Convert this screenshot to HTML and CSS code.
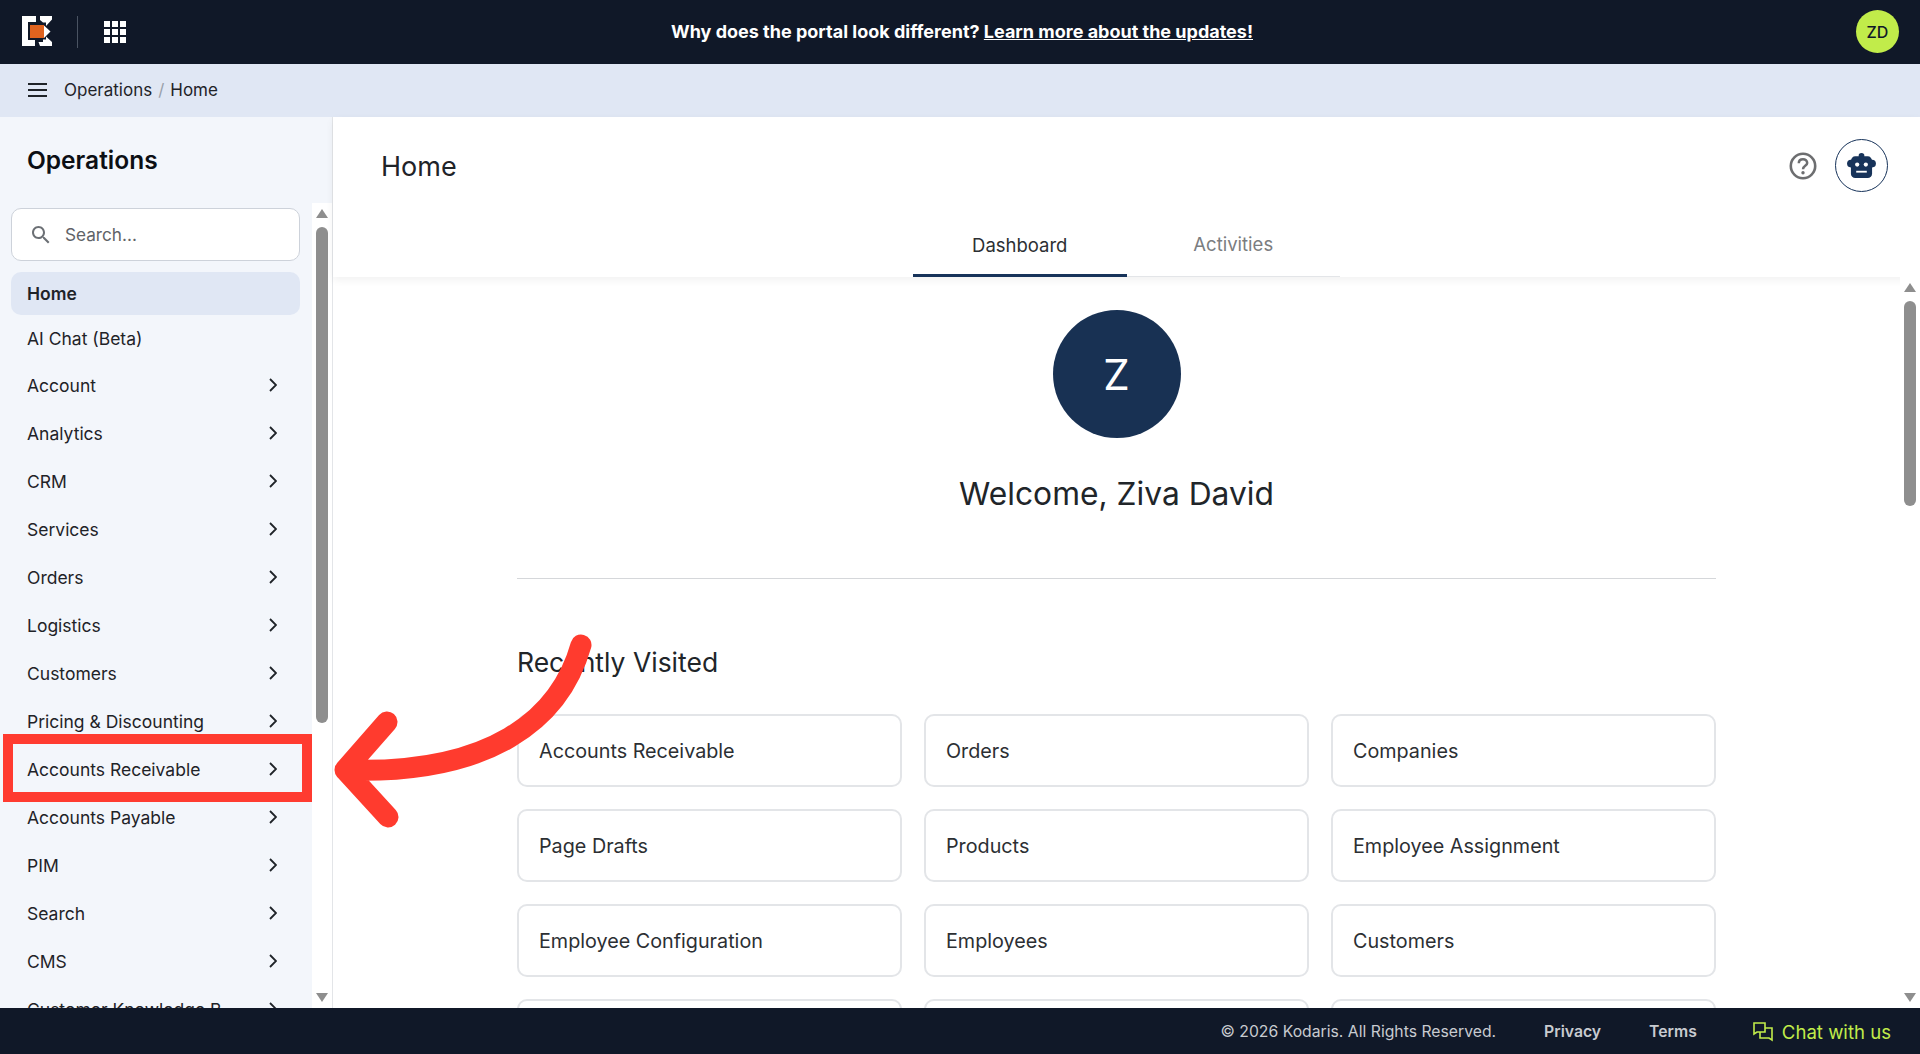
FILE: index.html

```html
<!DOCTYPE html>
<html lang="en">
<head>
  <meta charset="UTF-8">
  <title>Home - Operations</title>
  <link rel="stylesheet" href="styles.css">
</head>
<body>
  <header class="topbar">
    <div class="topbar-left">
      <svg class="logo" viewBox="0 0 30 30">
        <path fill="#fff" d="M0 0H14V6H6V24H13V30H0Z"/>
        <path fill="#fff" d="M18 0H30V3.500L24 10V6.500H21L18 4Z"/>
        <path fill="#fff" d="M24 20.500L30 26V30H18L16.500 26H21V23.500H24Z"/>
        <path fill="#fff" d="M22 9.500L28.500 15.500L22 22Z"/>
        <rect fill="#e0631f" x="8" y="9" width="14" height="13"/>
      </svg>
      <span class="topbar-divider"></span>
      <svg class="apps" viewBox="0 0 22 22" fill="#fff">
        <rect x="0" y="0" width="6" height="6"/><rect x="8" y="0" width="6" height="6"/><rect x="16" y="0" width="6" height="6"/>
        <rect x="0" y="8" width="6" height="6"/><rect x="8" y="8" width="6" height="6"/><rect x="16" y="8" width="6" height="6"/>
        <rect x="0" y="16" width="6" height="6"/><rect x="8" y="16" width="6" height="6"/><rect x="16" y="16" width="6" height="6"/>
      </svg>
    </div>
    <p class="banner">Why does the portal look different? <a href="#">Learn more about the updates!</a></p>
    <div class="user-badge">ZD</div>
  </header>

  <div class="crumbbar">
    <svg class="menu-icon" viewBox="0 0 19 14"><path d="M0 1H19M0 7H19M0 13H19"/></svg>
    <span>Operations</span><span class="crumb-sep">/</span><span>Home</span>
  </div>

  <div class="shell">
    <aside class="sidebar">
      <h2 class="sidebar-title">Operations</h2>
      <div class="sidebar-body">
        <div class="sidebar-col">
          <div class="search">
            <svg class="search-icon" viewBox="0 0 24 24"><path d="M15.500 14h-.79l-.28-.27C15.410 12.590 16 11.110 16 9.500 16 5.910 13.090 3 9.500 3S3 5.910 3 9.500 5.910 16 9.500 16c1.610 0 3.090-.59 4.230-1.570l.27.28v.79l5 4.990L20.490 19l-4.990-5zm-6 0C7.010 14 5 11.990 5 9.500S7.010 5 9.500 5 14 7.010 14 9.500 11.990 14 9.500 14z"/></svg>
            <span>Search...</span>
          </div>
          <nav class="nav">
            <a class="nav-item nav-home">Home</a>
            <a class="nav-item nav-plain">AI Chat (Beta)</a>
            <a class="nav-item">Account<svg class="chev" viewBox="0 0 8 14"><path d="M1 1L7 7L1 13"/></svg></a>
            <a class="nav-item">Analytics<svg class="chev" viewBox="0 0 8 14"><path d="M1 1L7 7L1 13"/></svg></a>
            <a class="nav-item">CRM<svg class="chev" viewBox="0 0 8 14"><path d="M1 1L7 7L1 13"/></svg></a>
            <a class="nav-item">Services<svg class="chev" viewBox="0 0 8 14"><path d="M1 1L7 7L1 13"/></svg></a>
            <a class="nav-item">Orders<svg class="chev" viewBox="0 0 8 14"><path d="M1 1L7 7L1 13"/></svg></a>
            <a class="nav-item">Logistics<svg class="chev" viewBox="0 0 8 14"><path d="M1 1L7 7L1 13"/></svg></a>
            <a class="nav-item">Customers<svg class="chev" viewBox="0 0 8 14"><path d="M1 1L7 7L1 13"/></svg></a>
            <a class="nav-item">Pricing &amp; Discounting<svg class="chev" viewBox="0 0 8 14"><path d="M1 1L7 7L1 13"/></svg></a>
            <a class="nav-item">Accounts Receivable<svg class="chev" viewBox="0 0 8 14"><path d="M1 1L7 7L1 13"/></svg></a>
            <a class="nav-item">Accounts Payable<svg class="chev" viewBox="0 0 8 14"><path d="M1 1L7 7L1 13"/></svg></a>
            <a class="nav-item">PIM<svg class="chev" viewBox="0 0 8 14"><path d="M1 1L7 7L1 13"/></svg></a>
            <a class="nav-item">Search<svg class="chev" viewBox="0 0 8 14"><path d="M1 1L7 7L1 13"/></svg></a>
            <a class="nav-item">CMS<svg class="chev" viewBox="0 0 8 14"><path d="M1 1L7 7L1 13"/></svg></a>
            <a class="nav-item">Customer Knowledge B...<svg class="chev" viewBox="0 0 8 14"><path d="M1 1L7 7L1 13"/></svg></a>
          </nav>
        </div>
        <div class="scrollbar">
          <span class="arrow-up"></span>
          <span class="thumb thumb-side"></span>
          <span class="arrow-down"></span>
        </div>
      </div>
    </aside>

    <main class="main">
      <div class="main-head">
        <div class="title-row">
          <h1>Home</h1>
          <div class="head-tools">
            <svg class="help" viewBox="0 0 28 28">
              <circle cx="14" cy="14" r="12.200"/>
              <path d="M9.800 11.200C9.800 8.600 11.700 7.200 14 7.200C16.300 7.200 18.200 8.700 18.200 11C18.200 13.800 14 13.900 14 17.200"/>
              <circle class="help-dot" cx="14" cy="20.800" r="1.700"/>
            </svg>
            <div class="bot">
              <svg viewBox="0 0 30 26" fill="#17335a">
                <circle cx="15" cy="3" r="3"/>
                <circle cx="4" cy="11" r="4"/>
                <circle cx="26" cy="11" r="4"/>
                <rect x="4" y="3.500" width="22" height="22.500" rx="4.500"/>
                <circle fill="#fff" cx="10.500" cy="12" r="2.200"/>
                <circle fill="#fff" cx="19.500" cy="12" r="2.200"/>
                <rect fill="#fff" x="9.500" y="18.500" width="11" height="1.900"/>
              </svg>
            </div>
          </div>
        </div>
        <div class="tabs">
          <a class="tab tab-active">Dashboard</a>
          <a class="tab">Activities</a>
        </div>
      </div>
      <div class="main-body">
        <div class="content">
          <div class="welcome">
            <div class="avatar">Z</div>
            <h2>Welcome, Ziva David</h2>
          </div>
          <h3>Recently Visited</h3>
          <div class="cards">
            <a class="card">Accounts Receivable</a>
            <a class="card">Orders</a>
            <a class="card">Companies</a>
            <a class="card">Page Drafts</a>
            <a class="card">Products</a>
            <a class="card">Employee Assignment</a>
            <a class="card">Employee Configuration</a>
            <a class="card">Employees</a>
            <a class="card">Customers</a>
            <a class="card"></a>
            <a class="card"></a>
            <a class="card"></a>
          </div>
        </div>
        <div class="scrollbar scrollbar-main">
          <span class="arrow-up"></span>
          <span class="thumb thumb-main"></span>
          <span class="arrow-down"></span>
        </div>
      </div>
    </main>
  </div>

  <footer class="footer">
    <span class="copy">© 2026 Kodaris. All Rights Reserved.</span>
    <a class="foot-link">Privacy</a>
    <a class="foot-link">Terms</a>
    <a class="chat">
      <svg viewBox="0 0 20 20"><path d="M1 1H12V10H4L1 12Z"/><path d="M12 6H19V18L16 16H7V10"/></svg>
      Chat with us
    </a>
  </footer>

  <!-- annotation drawn on top of the screenshot -->
  <div class="callout-box"></div>
  <svg class="callout-arrow" viewBox="0 0 1920 1054">
    <path d="M581 645C560 720 490 775 345 770M387 722L345 770L388 817"/>
  </svg>
</body>
</html>
```

FILE: styles.css

```css
* {
  box-sizing: border-box;
}

html, body {
  height: 100%;
}

body {
  margin: 0;
  display: flex;
  flex-direction: column;
  height: 100vh;
  overflow: hidden;
  font-family: Inter, "Liberation Sans", sans-serif;
  color: #1f2328;
  background: #fff;
}

.topbar {
  flex: 0 0 64px;
  display: grid;
  grid-template-columns: 1fr auto 1fr;
  align-items: center;
  padding: 0 22px;
  background: #101828;
}

.topbar-left {
  display: flex;
  align-items: center;
}

.logo {
  width: 30px;
  height: 30px;
  margin-top: -2px;
}

.topbar-divider {
  width: 1px;
  height: 32px;
  margin: 0 26px 0 25px;
  background: #4a5362;
}

.apps {
  width: 22px;
  height: 22px;
}

.banner {
  margin: 0 0 2px 4px;
  color: #fff;
  font-size: 18px;
  font-weight: 700;
}

.banner a {
  color: #fff;
  text-decoration: underline;
}

.user-badge {
  justify-self: end;
  width: 43px;
  height: 43px;
  margin: 0 -1px 1px 0;
  border-radius: 50%;
  background: #c1ec4a;
  color: #101828;
  display: flex;
  align-items: center;
  justify-content: center;
  font-size: 16px;
  font-weight: 500;
}

.crumbbar {
  flex: 0 0 53px;
  display: flex;
  align-items: center;
  padding: 0 0 2px 28px;
  background: #e0e7f4;
  font-size: 17px;
  color: #1f2328;
}

.menu-icon {
  width: 19px;
  height: 14px;
  margin-right: 17px;
}

.menu-icon path {
  stroke: #1f2328;
  stroke-width: 2;
  fill: none;
}

.crumb-sep {
  margin: 0 6px;
  color: #9aa1ab;
}

.shell {
  flex: 1;
  display: flex;
  min-height: 0;
}

.sidebar {
  flex: 0 0 333px;
  display: flex;
  flex-direction: column;
  background: #f3f6fb;
  border-right: 1px solid #e3e5e8;
}

.sidebar-title {
  margin: 0;
  padding: 28px 0 0 27px;
  height: 86px;
  font-size: 24.500px;
  font-weight: 600;
  color: #0c0f14;
}

.sidebar-body {
  flex: 1;
  display: flex;
  min-height: 0;
}

.sidebar-col {
  width: 312px;
  padding: 5px 0 0 11px;
  overflow: hidden;
}

.search {
  width: 289px;
  height: 53px;
  display: flex;
  align-items: center;
  padding-left: 17px;
  background: #fff;
  border: 1px solid #cdd2da;
  border-radius: 10px;
  font-size: 17.200px;
  color: #5f6368;
}

.search-icon {
  width: 24px;
  height: 24px;
  margin-right: 12px;
  fill: #6c7075;
}

.nav {
  margin-top: 11px;
  width: 289px;
}

.nav-item {
  display: flex;
  align-items: center;
  justify-content: space-between;
  height: 48px;
  padding: 0 23px 0 16px;
  font-size: 17.500px;
  color: #1f2328;
}

.nav-home {
  height: 43px;
  border-radius: 10px;
  background: #e0e7f4;
  font-weight: 600;
}

.nav-plain {
  height: 46px;
}

.chev {
  width: 8px;
  height: 14px;
}

.chev path {
  stroke: #1f2328;
  stroke-width: 1.800;
  fill: none;
}

.scrollbar {
  flex: 0 0 20px;
  display: flex;
  flex-direction: column;
  align-items: center;
  background: #fff;
  padding-top: 6px;
}

.arrow-up {
  width: 0;
  height: 0;
  border: 6px solid transparent;
  border-top: 0;
  border-bottom: 9px solid #8e8e8e;
}

.arrow-down {
  width: 0;
  height: 0;
  margin-top: auto;
  margin-bottom: 6px;
  border: 6px solid transparent;
  border-bottom: 0;
  border-top: 9px solid #8e8e8e;
}

.thumb {
  width: 12px;
  margin-top: 9px;
  border-radius: 6px;
  background: #8e8e8e;
}

.thumb-side {
  height: 496px;
}

.thumb-main {
  height: 205px;
}

.main {
  flex: 1;
  min-width: 0;
  display: flex;
  flex-direction: column;
}

.main-head {
  flex: 0 0 160px;
  box-shadow: 0 3px 8px rgba(0, 0, 0, 0.06);
}

.title-row {
  height: 108px;
  display: flex;
  align-items: flex-start;
  justify-content: space-between;
  padding: 33px 32px 0 48px;
}

.title-row h1 {
  margin: 0;
  font-size: 27px;
  font-weight: 400;
  color: #1f2328;
}

.head-tools {
  display: flex;
  align-items: center;
  gap: 18px;
  margin-top: -11px;
}

.help {
  width: 28px;
  height: 28px;
  margin-top: 1px;
}

.help circle {
  fill: none;
  stroke: #6d6e70;
  stroke-width: 2.600;
}

.help path {
  fill: none;
  stroke: #6d6e70;
  stroke-width: 2.500;
}

.help .help-dot {
  fill: #6d6e70;
  stroke: none;
}

.bot {
  width: 53px;
  height: 53px;
  border: 1.500px solid #17335a;
  border-radius: 50%;
  display: flex;
  align-items: center;
  justify-content: center;
}

.bot svg {
  width: 29px;
  height: 25px;
}

.tabs {
  display: flex;
  margin-left: 580px;
  width: 427px;
  height: 52px;
  border-bottom: 1px solid #e3e5e8;
}

.tab {
  flex: 1;
  display: flex;
  align-items: center;
  justify-content: center;
  padding-bottom: 13px;
  font-size: 18.500px;
  color: #7b7d80;
}

.tab-active {
  color: #2c2f33;
  border-bottom: 3px solid #17335a;
  height: 52px;
  padding-bottom: 10px;
}

.main-body {
  flex: 1;
  min-height: 0;
  display: flex;
}

.content {
  flex: 1;
  min-width: 0;
  overflow: hidden;
  padding: 0 184px;
}

.welcome {
  display: flex;
  flex-direction: column;
  align-items: center;
  height: 302px;
  padding-top: 33px;
  border-bottom: 1px solid #d5d7da;
}

.avatar {
  width: 128px;
  height: 128px;
  border-radius: 50%;
  background: #183153;
  color: #fff;
  display: flex;
  align-items: center;
  justify-content: center;
  font-size: 42px;
}

.welcome h2 {
  margin: 36px 0 0;
  font-size: 31.750px;
  font-weight: 400;
  color: #212529;
}

.content h3 {
  margin: 67px 0 0;
  font-size: 26.500px;
  font-weight: 400;
  color: #212529;
}

.cards {
  display: grid;
  grid-template-columns: repeat(3, 1fr);
  grid-auto-rows: 73px;
  gap: 22px;
  margin-top: 36px;
}

.card {
  display: flex;
  align-items: center;
  padding-left: 20px;
  border: 2px solid #e3e5e8;
  border-radius: 10px;
  font-size: 19.750px;
  color: #2c2f33;
}

.scrollbar-main {
  flex: 0 0 20px;
}

.footer {
  flex: 0 0 46px;
  display: flex;
  align-items: center;
  justify-content: flex-end;
  padding: 1px 29px 0 0;
  background: #101828;
  font-size: 15.750px;
}

.copy {
  color: #c8cbd0;
}

.foot-link {
  margin-left: 48px;
  color: #c8cbd0;
  font-weight: 600;
}

.chat {
  display: flex;
  align-items: center;
  margin-left: 56px;
  color: #c1ec4a;
  font-size: 18.600px;
}

.chat svg {
  width: 20px;
  height: 20px;
  margin-right: 9px;
  fill: none;
  stroke: #c1ec4a;
  stroke-width: 1.600;
}

.callout-box {
  position: absolute;
  left: 3px;
  top: 734px;
  width: 309px;
  height: 68px;
  border: 10px solid #ff3b30;
}

.callout-arrow {
  position: absolute;
  left: 0;
  top: 0;
  width: 1920px;
  height: 1054px;
  pointer-events: none;
}

.callout-arrow path {
  fill: none;
  stroke: #ff3b2e;
  stroke-width: 21;
  stroke-linecap: round;
  stroke-linejoin: round;
}
```
